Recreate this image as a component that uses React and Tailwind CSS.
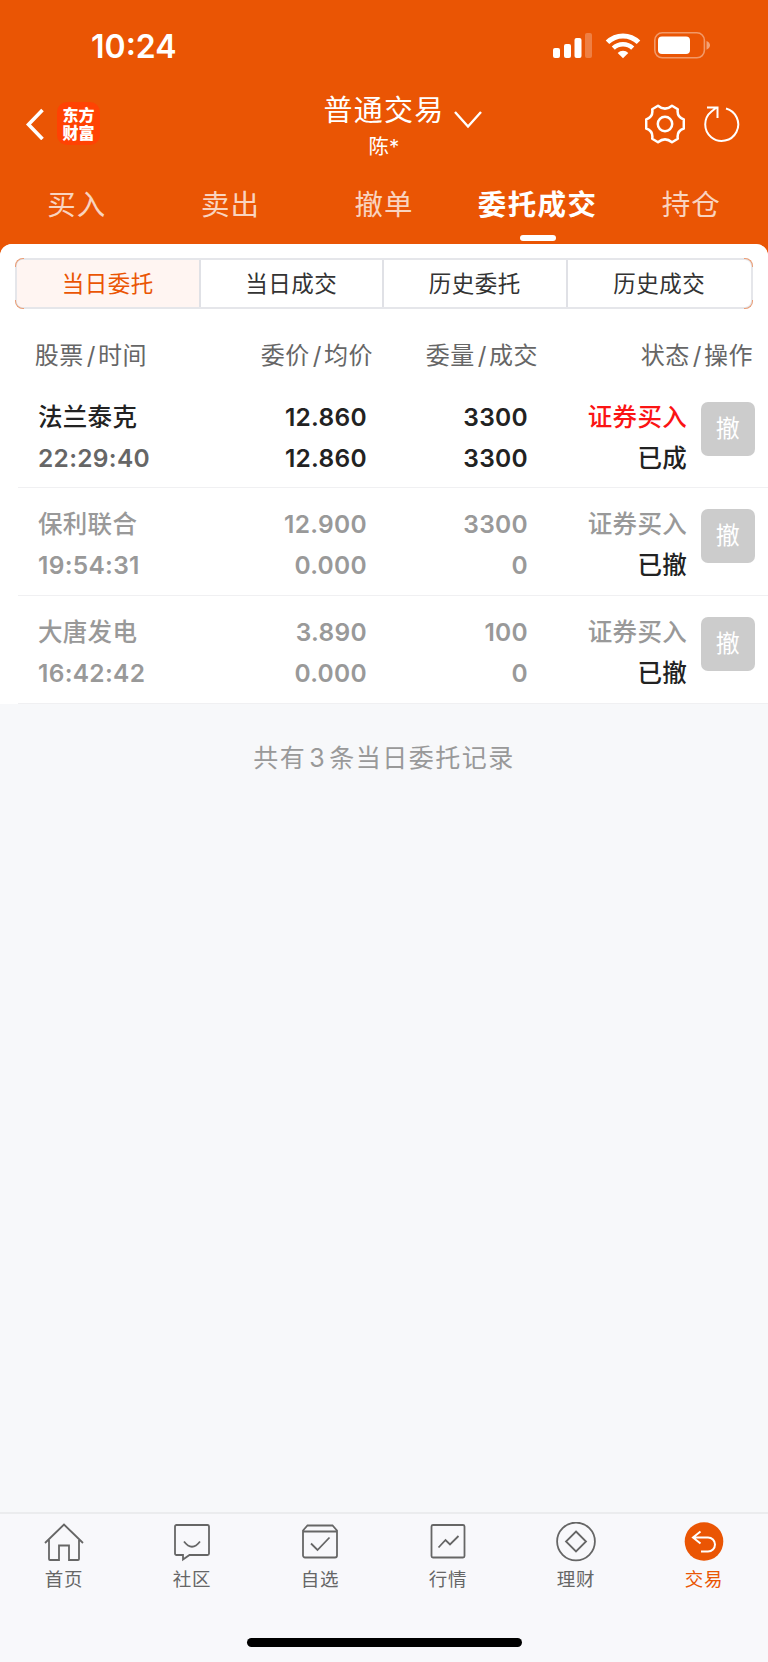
const tabs = [
  { label: "买入" },
  { label: "卖出" },
  { label: "撤单" },
  { label: "委托成交", active: true },
  { label: "持仓" },
];

const segments = ["当日委托", "当日成交", "历史委托", "历史成交"];

const orders = [
  {
    name: "法兰泰克",
    time: "22:29:40",
    price: "12.860",
    avg: "12.860",
    amount: "3300",
    filled: "3300",
    side: "证券买入",
    status: "已成",
    done: true,
  },
  {
    name: "保利联合",
    time: "19:54:31",
    price: "12.900",
    avg: "0.000",
    amount: "3300",
    filled: "0",
    side: "证券买入",
    status: "已撤",
  },
  {
    name: "大唐发电",
    time: "16:42:42",
    price: "3.890",
    avg: "0.000",
    amount: "100",
    filled: "0",
    side: "证券买入",
    status: "已撤",
  },
];

const navItems = [
  {
    label: "首页",
    icon: (
      <path d="M1 21 L20 2.500 L39 21 M5 18 V37 a1 1 0 0 0 1 1 H15 V23.500 H25 V38 H34 a1 1 0 0 0 1 -1 V18" />
    ),
  },
  {
    label: "社区",
    icon: (
      <path d="M4.500 3 H35.500 a1.500 1.500 0 0 1 1.500 1.500 V31.500 a1.500 1.500 0 0 1 -1.500 1.500 H17.500 L11 37.500 V33 H4.500 a1.500 1.500 0 0 1 -1.500 -1.500 V4.500 a1.500 1.500 0 0 1 1.500 -1.500 Z M12 19.500 Q20 30 28 19.500" />
    ),
  },
  {
    label: "自选",
    icon: (
      <path d="M3 9.500 H37 V33.500 a2 2 0 0 1 -2 2 H5 a2 2 0 0 1 -2 -2 V8.500 L7.500 3.500 H32.500 L37 8.500 V10 M11 21.500 L17.500 28 L29.500 15.500" />
    ),
  },
  {
    label: "行情",
    icon: (
      <path d="M5 3 H35 a1.500 1.500 0 0 1 1.500 1.500 V34 a1.500 1.500 0 0 1 -1.500 1.500 H5 a1.500 1.500 0 0 1 -1.500 -1.500 V4.500 a1.500 1.500 0 0 1 1.500 -1.500 Z M10.500 25.500 L17.500 18 L22 22.500 L30.500 14" />
    ),
  },
  {
    label: "理财",
    icon: (
      <>
        <circle cx="20" cy="19.500" r="18.900" />
        <path d="M20 9.500 L30 19.500 L20 29.500 L10 19.500 Z" />
      </>
    ),
  },
  {
    label: "交易",
    active: true,
    icon: (
      <>
        <circle cx="20" cy="19.500" r="19.300" fill="#ea5504" stroke="none" />
        <path
          d="M16.500 9.500 L9 15.500 L16.500 21.500 M9.500 15.500 H24 a6.800 6.800 0 0 1 0 14 H17"
          stroke="#fff"
          strokeWidth="2"
        />
      </>
    ),
  },
];

const StatusBar = () => (
  <div className="h-[88px] pl-[91px] pr-[57px] pt-[4px] flex items-center justify-between text-white">
    <span className="pt-[1px] text-[32px] leading-none font-semibold">10:24</span>
    <div className="flex items-center pb-px">
      <svg width="39" height="25" viewBox="0 0 39 25" fill="#fff">
        <rect x="0" y="15" width="7" height="10" rx="2" />
        <rect x="11" y="11" width="7" height="14" rx="2" />
        <rect x="21.500" y="5" width="7" height="20" rx="2" />
        <rect x="32" y="0" width="7" height="25" rx="2" opacity="0.25" />
      </svg>
      <svg className="ml-[13px]" width="36" height="26" viewBox="0 0 36 26" fill="none" stroke="#fff">
        <path d="M2.500 9.300 A22 22 0 0 1 33.500 9.300" strokeWidth="5" />
        <path d="M8.300 15.200 A14 14 0 0 1 27.700 15.200" strokeWidth="4.500" />
        <path d="M18 25.300 L12.700 20 A7.500 7.500 0 0 1 23.300 20 Z" fill="#fff" stroke="none" />
      </svg>
      <svg className="ml-[13px]" width="57" height="27" viewBox="0 0 57 27">
        <rect x="0.800" y="0.800" width="49.600" height="25" rx="7.500" fill="none" stroke="#fff" strokeWidth="1.600" opacity="0.4" />
        <rect x="4" y="4.500" width="32" height="17.500" rx="4" fill="#fff" />
        <path d="M52.500 9 Q56 10.500 56 13.300 Q56 16 52.500 17.800 Z" fill="#fff" opacity="0.450" />
      </svg>
    </div>
  </div>
);

const TitleBar = () => (
  <div className="h-[78px] grid grid-cols-[1fr_auto_1fr] items-start text-white">
    <div className="flex items-center pl-[25px] pt-[14px]">
      <svg width="19" height="32" viewBox="0 0 19 32" fill="none" stroke="#fff" strokeWidth="3.600">
        <path d="M17.500 2 L3.500 16.500 L17.500 31" />
      </svg>
      <div className="ml-[13px] size-[43px] rounded-[10px] bg-[#ff4203] flex flex-col justify-center items-center text-[16px] leading-[18px] font-black">
        <span>东方</span>
        <span>财富</span>
      </div>
    </div>
    <div className="flex pl-[37px] pt-[3px]">
      <div className="flex flex-col items-center">
        <span className="text-[29px] leading-[40px] tracking-[1.3px]">普通交易</span>
        <span className="text-[20.5px] leading-[32px]">陈*</span>
      </div>
      <svg className="ml-[9px] mt-[19px]" width="28" height="20" viewBox="0 0 28 20" fill="none" stroke="#fff" strokeWidth="2.400">
        <path d="M1 2 L14 16.500 L27 2" />
      </svg>
    </div>
    <div className="flex items-center justify-end gap-[19px] pr-[28px] pt-[16px]">
      <svg width="40" height="40" viewBox="-20 -20 40 40" fill="none" stroke="#fff" strokeWidth="2.500" strokeLinejoin="round">
        <circle r="7.200" />
        <path d="M-7 -18.300 Q0 -12.500 7 -18.300 L12.800 -14.800 Q11.500 -7 18.800 -4.500 V4.500 Q11.500 7 12.800 14.800 L7 18.300 Q0 12.500 -7 18.300 L-12.800 14.800 Q-11.500 7 -18.800 4.500 V-4.500 Q-11.500 -7 -12.800 -14.800 Z" />
      </svg>
      <svg width="36" height="36" viewBox="0 0 36 36" fill="none" stroke="#fff" strokeWidth="2">
        <path d="M22 2.500 A16.500 16.500 0 1 1 7.500 5.500 L12.500 1.500 M3 1.500 H13.500 V12" />
      </svg>
    </div>
  </div>
);

const Tabs = () => (
  <nav className="h-[78px] grid grid-cols-5">
    {tabs.map((tab) => (
      <div key={tab.label} className="flex flex-col items-center pt-[19px]">
        <span
          className={`text-[28.5px] leading-[40px] whitespace-nowrap ${
            tab.active ? "tracking-[1.4px] font-semibold text-white" : "tracking-[1px] text-white/75"
          }`}
        >
          {tab.label}
        </span>
        {tab.active && <div className="mt-[10px] w-[36px] h-[6px] rounded-full bg-white" />}
      </div>
    ))}
  </nav>
);

const Segments = () => (
  <div className="relative mx-[15px]">
    <div className="h-[51px] grid grid-cols-4 rounded-[8px] border-2 border-[#e5e6ea] overflow-hidden">
      {segments.map((label, i) => (
        <div
          key={label}
          className={`flex items-center justify-center text-[22.5px] tracking-[0.5px] border-[#e0e1e6] ${
            i === 0 ? "bg-[#fff5f2] text-[#ea5504]" : "text-[#333]"
          } ${i < segments.length - 1 ? "border-r-2" : ""}`}
        >
          {label}
        </div>
      ))}
    </div>
    {/* Accent on the rounded corners */}
    <i className="absolute left-0 top-0 size-[9px] rounded-tl-[8px] border-l border-t border-[#ec9d74]" />
    <i className="absolute left-0 bottom-0 size-[9px] rounded-bl-[8px] border-l border-b border-[#ec9d74]" />
    <i className="absolute right-0 top-0 size-[9px] rounded-tr-[8px] border-r border-t border-[#ec9d74]" />
    <i className="absolute right-0 bottom-0 size-[9px] rounded-br-[8px] border-r border-b border-[#ec9d74]" />
  </div>
);

const HeadCell = ({ left, right }) => (
  <div className="flex justify-end whitespace-nowrap">
    <span>{left}</span>
    <span className="pl-[3px] pr-[2px]">/</span>
    <span>{right}</span>
  </div>
);

const OrderRow = ({ order }) => {
  const main = order.done ? "text-[#222]" : "text-[#999]";

  return (
    <div className="ml-[18px] h-[107.7px] border-b border-[#f0f0f2] pl-[20px] pr-[13px] pt-[16px] flex text-[24.5px] leading-[41.2px] tracking-[0.3px] font-medium">
      <div className={`w-[160px] ${main}`}>
        <p>{order.name}</p>
        <p className={`font-semibold ${order.done ? "text-[#666]" : ""}`}>{order.time}</p>
      </div>
      <div className={`w-[169px] text-right font-semibold ${main}`}>
        <p>{order.price}</p>
        <p>{order.avg}</p>
      </div>
      <div className={`w-[161px] text-right font-semibold ${main}`}>
        <p>{order.amount}</p>
        <p>{order.filled}</p>
      </div>
      <div className="w-[159px] text-right">
        <p className={order.done ? "text-[#fb1414]" : "text-[#999]"}>{order.side}</p>
        <p className="text-[#222]">{order.status}</p>
      </div>
      <button className="ml-auto mt-[5px] size-[54px] rounded-[7px] bg-[#ccc] text-white text-[24px] leading-[54px] font-normal">
        撤
      </button>
    </div>
  );
};

const BottomNav = () => (
  <footer className="h-[150px] border-t-2 border-[#ebecee] bg-[#f8f8fb] flex flex-col">
    <div className="grid grid-cols-6">
      {navItems.map((item) => (
        <div
          key={item.label}
          className={`flex flex-col items-center pt-[8px] ${item.active ? "text-[#ea5504]" : "text-[#666]"}`}
        >
          <svg width="40" height="40" viewBox="0 0 40 40" fill="none" stroke="currentColor" strokeWidth="1.800">
            {item.icon}
          </svg>
          <span className="mt-[4px] text-[18.5px] leading-[26px] tracking-[0.7px]">{item.label}</span>
        </div>
      ))}
    </div>
    <div className="mt-auto mb-[15px] mx-auto w-[275px] h-[9px] rounded-full bg-black" />
  </footer>
);

const App = () => {
  return (
    <div
      lang="zh-CN"
      className="w-[768px] h-[1662px] flex flex-col bg-[#ea5504] font-['Inter','Noto_Sans_CJK_SC',sans-serif]"
    >
      <StatusBar />
      <TitleBar />
      <Tabs />

      <main className="flex-1 rounded-t-[12px] overflow-hidden bg-[#f7f8fa]">
        <div className="bg-white pt-[14px]">
          <Segments />
          <div className="h-[71.500px] pl-[34px] pr-[15px] pt-[27px] grid grid-cols-[113px_226px_165px_1fr] text-[24px] leading-[40px] tracking-[0.5px] text-[#666]">
            <HeadCell left="股票" right="时间" />
            <HeadCell left="委价" right="均价" />
            <HeadCell left="委量" right="成交" />
            <HeadCell left="状态" right="操作" />
          </div>
          {orders.map((order) => (
            <OrderRow key={order.name} order={order} />
          ))}
        </div>
        <p className="pt-[34px] text-center text-[25px] leading-[40px] tracking-[1.5px] text-[#999]">
          共有<span className="mx-[3px]">3</span>条当日委托记录
        </p>
      </main>

      <BottomNav />
    </div>
  );
};

export default App;
